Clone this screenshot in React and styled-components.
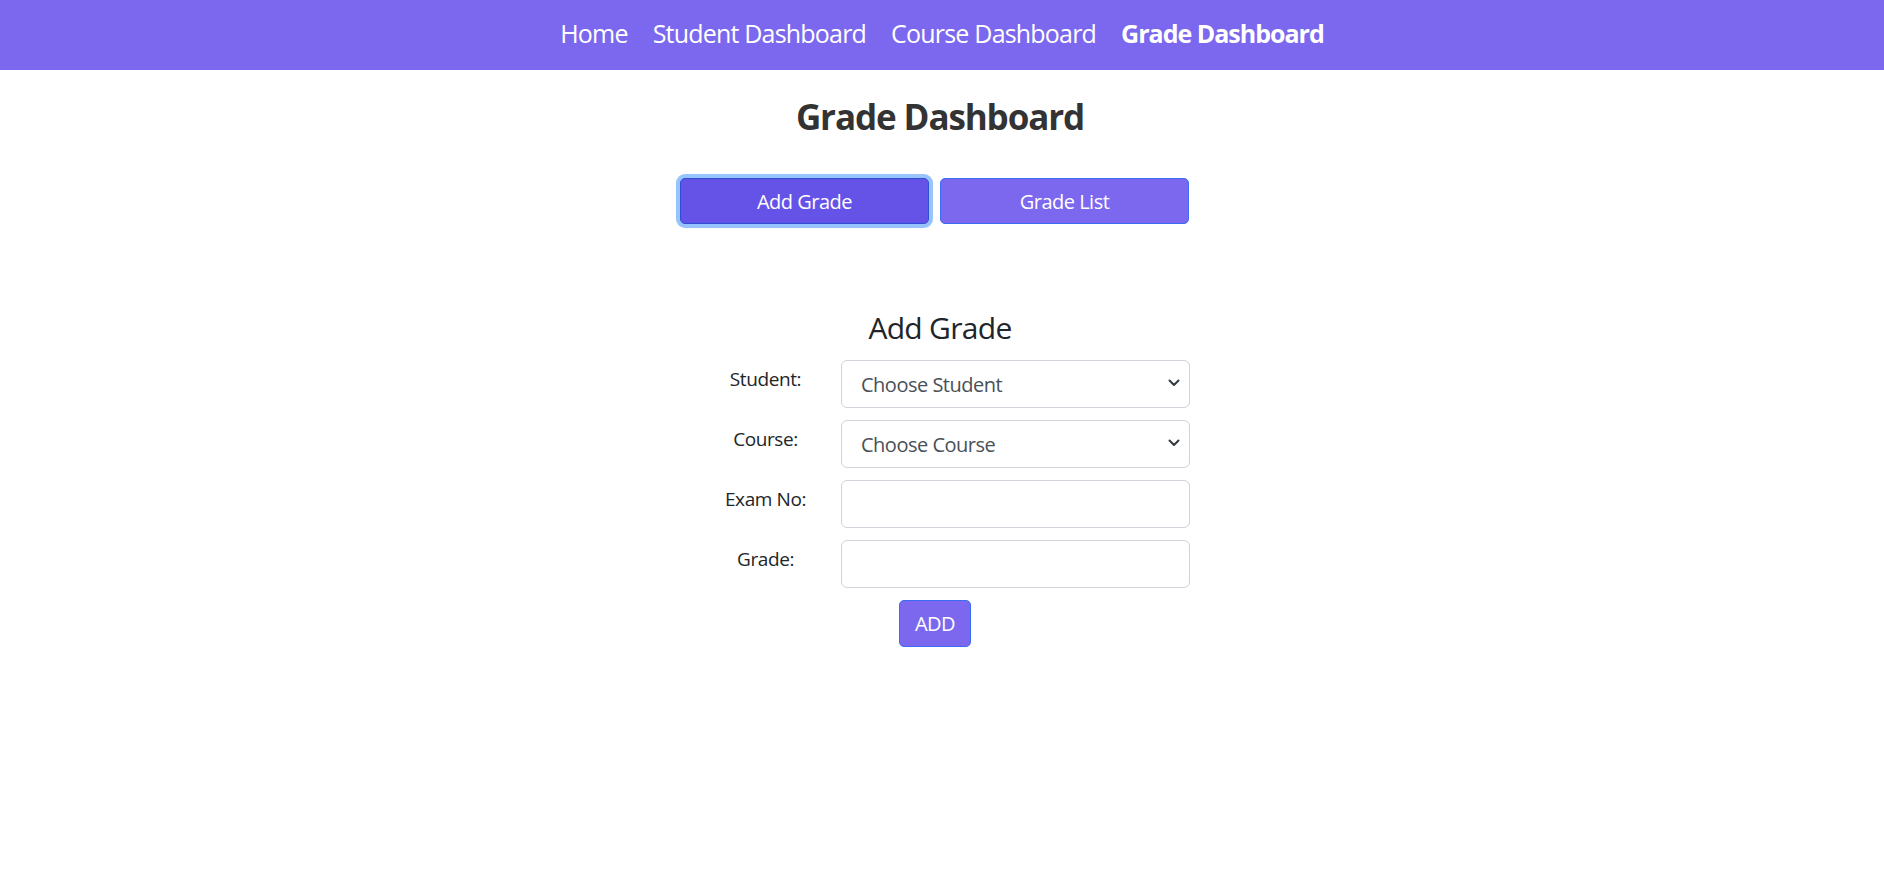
import React from "react";
import styled, { createGlobalStyle } from "styled-components";

const Global = createGlobalStyle`
  html, body { margin: 0; padding: 0; background: #fff; }
  body {
    font-family: "Open Sans", "Noto Sans", sans-serif;
    color: #212529;
  }
  * { box-sizing: border-box; }
`;

const NavBar = styled.nav`
  height: 70px;
  background: #7b68ee;
  display: flex;
  justify-content: center;
  align-items: center;
  gap: 25px;
  padding-bottom: 4px;
`;

const NavLink = styled.a`
  color: #fff;
  font-size: 25px;
  letter-spacing: ${(p) => (p.$active ? "-1px" : "-0.8px")};
  font-weight: ${(p) => (p.$active ? 700 : 400)};
  text-decoration: none;
  cursor: pointer;
`;

const Main = styled.main`
  display: flex;
  flex-direction: column;
  align-items: center;
  padding-right: 4px;
`;

const Title = styled.h1`
  margin: 26px 0 0;
  font-size: 35px;
  line-height: 42px;
  font-weight: 700;
  letter-spacing: -1.1px;
  color: #333;
`;

const TabRow = styled.div`
  display: flex;
  margin-top: 40px;
`;

const TabButton = styled.button`
  width: 249px;
  height: 46px;
  margin-right: 11px;
  border-radius: 5px;
  border: 1px solid ${(p) => (p.$active ? "#2e4fd4" : "#3a6cf4")};
  background: ${(p) => (p.$active ? "#6553e8" : "#7b68ee")};
  color: #fff;
  font-family: inherit;
  font-size: 20px;
  letter-spacing: -0.5px;
  cursor: pointer;
  box-shadow: ${(p) => (p.$active ? "0 0 0 4px #98c4fe" : "none")};
`;

const FormSection = styled.section`
  width: 500px;
  margin-top: 84px;
  display: flex;
  flex-direction: column;
  align-items: center;
`;

const FormHeading = styled.h3`
  margin: 0 0 12px;
  font-size: 30px;
  line-height: 40px;
  font-weight: 400;
  letter-spacing: -0.7px;
  color: #212529;
`;

const FieldRow = styled.div`
  width: 100%;
  display: grid;
  grid-template-columns: 151px 1fr;
  align-items: start;
  margin-bottom: 12px;
`;

const Label = styled.label`
  text-align: center;
  font-size: 19px;
  line-height: 30px;
  padding-top: 4px;
  letter-spacing: -0.4px;
  color: #212529;
`;

const SelectWrap = styled.div`
  position: relative;
`;

const Select = styled.select`
  appearance: none;
  -webkit-appearance: none;
  width: 100%;
  height: 48px;
  padding: 0 40px 0 19px;
  border: 1px solid #ced4da;
  border-radius: 6px;
  background: #fff;
  font-family: inherit;
  font-size: 20px;
  letter-spacing: -0.5px;
  color: #495057;
  outline: none;
`;

const Chevron = styled.svg`
  position: absolute;
  right: 10px;
  top: 18px;
  width: 12px;
  height: 9px;
  pointer-events: none;
`;

const Input = styled.input`
  width: 100%;
  height: 48px;
  padding: 0 19px;
  border: 1px solid #ced4da;
  border-radius: 6px;
  font-family: inherit;
  font-size: 20px;
  color: #212529;
  outline: none;
`;

const SubmitButton = styled.button`
  height: 47px;
  padding: 0 15px;
  margin-right: 10px;
  border-radius: 5px;
  border: 1px solid #3a6cf4;
  background: #7b68ee;
  color: #fff;
  font-family: inherit;
  font-size: 20px;
  letter-spacing: -0.5px;
  cursor: pointer;
`;

const ChevronIcon = () => (
  <Chevron viewBox="0 0 12 9" fill="none">
    <path
      d="M1.5 2.5 6 7l4.5-4.5"
      stroke="#343a40"
      strokeWidth="2"
      strokeLinecap="round"
      strokeLinejoin="round"
    />
  </Chevron>
);

const SelectField = ({ label, placeholder }) => (
  <FieldRow>
    <Label>{label}</Label>
    <SelectWrap>
      <Select defaultValue="">
        <option value="">{placeholder}</option>
      </Select>
      <ChevronIcon />
    </SelectWrap>
  </FieldRow>
);

const InputField = ({ label }) => (
  <FieldRow>
    <Label>{label}</Label>
    <Input type="text" />
  </FieldRow>
);

export default function App() {
  return (
    <>
      <Global />
      <NavBar>
        <NavLink>Home</NavLink>
        <NavLink>Student Dashboard</NavLink>
        <NavLink>Course Dashboard</NavLink>
        <NavLink $active>Grade Dashboard</NavLink>
      </NavBar>
      <Main>
        <Title>Grade Dashboard</Title>
        <TabRow>
          <TabButton $active>Add Grade</TabButton>
          <TabButton>Grade List</TabButton>
        </TabRow>
        <FormSection>
          <FormHeading>Add Grade</FormHeading>
          <SelectField label="Student:" placeholder="Choose Student" />
          <SelectField label="Course:" placeholder="Choose Course" />
          <InputField label="Exam No:" />
          <InputField label="Grade:" />
          <SubmitButton>ADD</SubmitButton>
        </FormSection>
      </Main>
    </>
  );
}
